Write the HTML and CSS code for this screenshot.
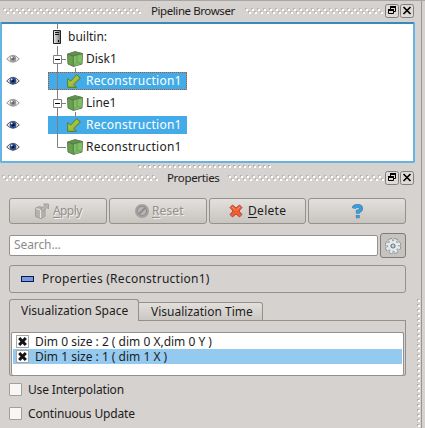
FILE: index.html
```html
<!DOCTYPE html>
<html lang="en">
<head>
<meta charset="utf-8">
<title>Pipeline Browser</title>
<link rel="stylesheet" href="styles.css">
</head>
<body>
<svg class="defs" width="0" height="0">
  <defs>
    <linearGradient id="metal"><stop offset="0" stop-color="#eee"/><stop offset="1" stop-color="#777"/></linearGradient>
    <linearGradient id="leaf" x2="1" y2="1"><stop offset="0" stop-color="#c5dd4a"/><stop offset="1" stop-color="#7da52c"/></linearGradient>
    <pattern id="grip" width="6" height="6" patternUnits="userSpaceOnUse">
      <path fill="#b9b5b2" d="M0 0h2v2h-2zM3 3h2v2h-2z"/><path fill="#fff" d="M1 1h2v2h-2zM4 4h2v2h-2z"/>
    </pattern>
    <pattern id="hdots" width="5" height="3" patternUnits="userSpaceOnUse">
      <path fill="#b3afac" d="M0 0h2v2h-2z"/><path fill="#fff" d="M1 1h2v2h-2z"/>
    </pattern>
    <pattern id="vdots" width="3" height="5" patternUnits="userSpaceOnUse">
      <path fill="#b3afac" d="M0 0h2v2h-2z"/><path fill="#fff" d="M1 1h2v2h-2z"/>
    </pattern>
    <symbol id="eye" viewBox="0 0 14 10">
      <path d="M.7 5Q7-2.5 13.3 5Q7 11.5.7 5z" fill="#eee" stroke="#555" stroke-width="1"/>
      <circle cx="7" cy="4.8" r="3.4" fill="#2c4f91"/><circle cx="7" cy="4.8" r="1.6" fill="#071637"/><circle cx="5.7" cy="3.4" r=".9" fill="#dce6fa"/>
    </symbol>
    <symbol id="eye-off" viewBox="0 0 14 10">
      <path d="M.7 5Q7-2.5 13.3 5Q7 11.5.7 5z" fill="#eee" stroke="#999" stroke-width="1"/>
      <circle cx="7" cy="4.8" r="3.2" fill="#999"/><circle cx="7" cy="4.8" r="1.5" fill="#666"/><circle cx="5.7" cy="3.4" r=".9" fill="#fff"/>
    </symbol>
    <symbol id="cube" viewBox="0 0 16 16">
      <path d="M.5 3L8 .6l7.500 1.900-.5 10.500L6.500 15.500l-5.500-2.500z" fill="#68a04f" stroke="#587d4e" stroke-linejoin="round"/>
      <path d="M.8 3.200L8 1l7.200 1.700L6.200 5z" fill="#648d55"/><path d="M6.200 5l9-2.300-.5 10-8.200 2.600z" fill="#80bd66"/>
      <path d="M.8 3.200L6.200 5l.3 10M6.200 5l9-2.300" fill="none" stroke="#4d7440" stroke-width=".8"/>
      <path d="M10 4v7.500l4.500 1.200M10 11.500l-3.500 3.500" fill="none" stroke="#5f984b" stroke-width=".8"/>
    </symbol>
    <symbol id="arrow" viewBox="0 0 14 14">
      <path d="M.7 4.500V13.300H9.500L6.900 10.500L13.300 4.200L9.700.7L3.600 7.200z" fill="url(#leaf)" stroke="#587b22" stroke-linejoin="round"/>
    </symbol>
    <symbol id="float" viewBox="0 0 15 15">
      <rect x=".5" y=".5" width="13" height="13" rx="2" fill="#dedad7" stroke="#817e7b"/>
      <path d="M5.500 6V3.500h5v4H9" fill="none" stroke="#000"/><path d="M5 2h6v2H5zM3 5h6v2H3z"/><path d="M3.500 6.500h5v3h-5z" fill="#dedad7" stroke="#000"/>
    </symbol>
    <symbol id="close" viewBox="0 0 15 15">
      <rect x=".5" y=".5" width="13" height="13" rx="2" fill="#dedad7" stroke="#817e7b"/>
      <path d="M3.500 3l7 7M10.500 3l-7 7" stroke="#000" stroke-width="1.700"/>
    </symbol>
    <symbol id="mark" viewBox="0 0 13 13">
      <rect x=".5" y=".5" width="12" height="12" fill="#fff" stroke="#a9a6a3"/>
      <path d="M3.200 3l6.600 7M9.800 3l-6.600 7" stroke="#151515" stroke-width="3"/>
    </symbol>
  </defs>
</svg>
<div class="window">
  <main class="dock">
    <header class="titlebar">
      <svg class="grip" width="138" height="6"><rect width="138" height="6" fill="url(#grip)"/></svg>
      <h1 class="title t-pipeline">Pipeline Browser</h1>
      <svg class="grip" width="138" height="6"><rect width="138" height="6" fill="url(#grip)"/></svg>
      <svg class="tool first" width="15" height="15"><use href="#float"/></svg>
      <svg class="tool" width="15" height="15"><use href="#close"/></svg>
    </header>
    <section class="tree">
      <svg class="branches" width="40" height="138">
        <path d="M9.500 0v5M9.500 22v9M9.500 40v35M9.500 84v39.500H18M14 35.500h4M14 79.500h4M27.500 44v5M27.500 88v5" fill="none" stroke="#808080"/>
        <path d="M5.500 31.500h8v8h-8zM5.500 75.500h8v8h-8z" fill="#fff" stroke="#808080"/><path d="M7 35.500h5M7 79.500h5" stroke="#000"/>
      </svg>
      <div class="row root">
        <svg width="9" height="15" viewBox="0 0 9 15"><path d="M.5.500h7v13h-7z" fill="url(#metal)" stroke="#222"/><path d="M2 2.500h4M2 4.500h4" stroke="#111"/><path d="M5 10h1v2H5z"/></svg>
        <span class="name">builtin:</span>
      </div>
      <div class="row"><svg class="eye" width="14" height="10"><use href="#eye-off"/></svg><div class="item"><svg class="cube" width="16" height="16"><use href="#cube"/></svg><span class="name">Disk1</span></div></div>
      <div class="row"><svg class="eye" width="14" height="10"><use href="#eye"/></svg><div class="item selected focus"><svg class="arrow" width="14" height="14"><use href="#arrow"/></svg><span class="name long">Reconstruction1</span></div></div>
      <div class="row"><svg class="eye" width="14" height="10"><use href="#eye-off"/></svg><div class="item"><svg class="cube" width="16" height="16"><use href="#cube"/></svg><span class="name">Line1</span></div></div>
      <div class="row"><svg class="eye" width="14" height="10"><use href="#eye"/></svg><div class="item selected"><svg class="arrow" width="14" height="14"><use href="#arrow"/></svg><span class="name long">Reconstruction1</span></div></div>
      <div class="row"><svg class="eye" width="14" height="10"><use href="#eye"/></svg><div class="item"><svg class="cube" width="16" height="16"><use href="#cube"/></svg><span class="name long">Reconstruction1</span></div></div>
    </section>
    <svg class="splitter" width="134" height="3"><rect width="134" height="3" fill="url(#hdots)"/></svg>
    <header class="titlebar second">
      <svg class="grip" width="156" height="6"><rect width="156" height="6" fill="url(#grip)"/></svg>
      <h1 class="title t-properties">Properties</h1>
      <svg class="grip" width="156" height="6"><rect width="156" height="6" fill="url(#grip)"/></svg>
      <svg class="tool first" width="15" height="15"><use href="#float"/></svg>
      <svg class="tool" width="15" height="15"><use href="#close"/></svg>
    </header>
    <div class="buttons">
      <button class="btn disabled"><svg width="16" height="16" viewBox="0 0 16 16"><path d="M1.500 5l4-1.500 5.500 2v8l-4 2-5.500-2z" fill="#b4b2b0" stroke="#a09e9c"/><path d="M2 5.500l4.500 1.500v8M6.500 7l4-1.500" fill="none" stroke="#e6e4e1"/><path d="M6.500 6l4.500-3.500-1.500-1.500h5v5l-1.500-1.500L9 8.500z" fill="#b8b5b3" stroke="#9a9896" stroke-width=".8"/></svg><span class="b-apply"><u>A</u>pply</span></button>
      <button class="btn disabled"><svg width="16" height="16" viewBox="0 0 16 16"><circle cx="8" cy="8" r="7" fill="#a3a19f"/><circle cx="8" cy="8" r="4.500" fill="#b8b6b4" stroke="#8f8d8b"/><path d="M5 11l6-6" stroke="#8f8d8b" stroke-width="2"/></svg><span class="b-reset"><u>R</u>eset</span></button>
      <button class="btn"><svg width="14" height="14" viewBox="0 0 14 14"><path d="M3.500 1L7 4l3.500-3L13 3.500 10 7l3 3.500-2.500 2.500L7 10l-3.500 3L1 10.500 4 7 1 3.500z" fill="#f55a30" stroke="#a5523f" stroke-linejoin="round"/><path d="M3 3l3.500 3M11 3L8 5.500" stroke="#ff9b78"/></svg><span class="b-delete"><u>D</u>elete</span></button>
      <button class="btn help"><svg width="12" height="15" viewBox="0 0 12 15"><path d="M1.500 4.500Q2.200 2 5.500 2Q9.500 2 9 5Q8.700 6.500 5.800 7.500V9.700M5.800 11v3.300" fill="none" stroke="#607f94" stroke-width="3.900"/><path d="M2 4.300Q3 2.200 5.500 2.200Q9.200 2.200 8.800 5Q8.500 6.300 5.800 7.500V9.200M5.800 11.500v2.200" fill="none" stroke="#28a5f5" stroke-width="2.500"/></svg></button>
    </div>
    <div class="searchbar">
      <div class="search"><span>Search...</span></div>
      <button class="gear"><svg width="18" height="18" viewBox="-9 -9 18 18"><circle r="6.100" fill="none" stroke="#77828b" stroke-width="4" stroke-dasharray="3.200 1.590"/><circle r="5.500" fill="#e4ebef" stroke="#8b959d"/><circle r="5.800" fill="none" stroke="#e4ebef" stroke-width="3.200" stroke-dasharray="2.600 1.955" stroke-dashoffset="-.2"/><circle r="2" fill="#cfd3d5" stroke="#747c82" stroke-width="1.200"/></svg></button>
    </div>
    <div class="group"><i class="minus"></i><span class="g-title">Properties (Reconstruction1)</span></div>
    <div class="tabs">
      <div class="tab active"><span>Visualization Space</span></div>
      <div class="tab"><span>Visualization Time</span></div>
      <div class="tabline"></div>
    </div>
    <div class="panel">
      <div class="list">
        <div class="option"><svg width="13" height="13"><use href="#mark"/></svg><span>Dim 0 size : 2 ( dim 0 X,dim 0 Y )</span></div>
        <div class="option chosen"><svg width="13" height="13"><use href="#mark"/></svg><span>Dim 1 size : 1 ( dim 1 X )</span></div>
      </div>
    </div>
    <label class="check"><i class="box"></i><span>Use Interpolation</span></label>
    <label class="check"><i class="box"></i><span>Continuous Update</span></label>
  </main>
  <aside class="edge"><svg width="3" height="130"><rect width="3" height="130" fill="url(#vdots)"/></svg></aside>
</div>
</body>
</html>
```
FILE: styles.css
```css
* { box-sizing: border-box; }
body { margin: 0; width: 425px; height: 428px; overflow: hidden; background: #d6d2cf; color: #1d1d1d; font: 12px/16px "Noto Sans", sans-serif; }
svg { display: block; flex: none; }
span, h1 { white-space: nowrap; }
.defs { position: absolute; }
.window { display: flex; height: 428px; border-top: 1px solid #aaa6a3; }
.dock { width: 415px; }
.edge { width: 7px; padding: 298px 0 0 2px; border-right: 1px solid #999693; }
.titlebar { display: flex; align-items: flex-start; height: 21px; padding: 3px 0 0 3px; }
.titlebar .grip { margin-top: 4px; }
.title { margin: -1px 10px 0; font-size: 11.5px; line-height: 16px; font-weight: 400; letter-spacing: -.42px; }
.t-pipeline { width: 84px; }
.t-properties { width: 52px; margin: -1px 9px 0; letter-spacing: -.34px; }
.tool.first { margin-left: 2px; }
.second .first { margin-left: 1px; }
.tree { position: relative; height: 141px; padding: 2px 0 0; border: 2px solid #65b3e3; border-top-color: #388abd; border-radius: 2px; background: #fff; }
.branches { position: absolute; left: 46px; top: 0; z-index: 1; }
.row { display: flex; align-items: center; height: 22px; }
.root { padding-left: 51px; }
.root .name { margin-left: 6px; }
.eye { margin-left: 4px; }
.item { display: flex; align-items: center; width: 139px; height: 18px; margin-left: 28px; padding-left: 19px; }
.item .name { margin-left: 3px; }
.long { letter-spacing: .26px; }
.arrow { margin-right: 2px; }
.selected { background: #43ace8; color: #fff; }
.focus { padding-left: 18px; border: 1px dotted #c0501c; }
.splitter { margin: 2px 0 0 138px; }
.second { height: 30px; padding: 3px 0 0 2px; }
.buttons { display: grid; grid-template-columns: 98px 98px 98px 98px; column-gap: 2px; padding-left: 9px; height: 26px; width: 415px; }
.btn { display: flex; align-items: center; justify-content: flex-start; height: 26px; padding: 0 0 0 24px; border: 1px solid #94908d; border-radius: 3px; background: linear-gradient(#e3e0dd, #c8c4c0); color: #1d1d1d; font: 12px/16px "Noto Sans", sans-serif; }
.btn span { margin-left: 3px; }
.b-apply { letter-spacing: -.6px; }
.btn .b-reset { margin-left: 2px; letter-spacing: .1px; }
.btn u { text-underline-offset: 2px; }
.btn:nth-child(3) { width: 97px; padding-left: 19px; }
.btn .b-delete { margin-left: 5px; letter-spacing: .3px; }
.btn.disabled { color: #93908d; text-shadow: 1px 1px #f0eeec; }
.btn.help { margin-left: -1px; width: 98px; padding-left: 43px; }
.searchbar { display: flex; gap: 2px; align-items: center; height: 25px; margin: 9px 0 0 9px; }
.search { width: 369px; height: 21px; padding: 1px 4px; border: 1px solid #94908d; border-radius: 2px; background: #fff; color: #8b8b8b; letter-spacing: -.1px; }
.gear { display: flex; align-items: center; width: 26px; height: 25px; padding: 0 3px; border: 1px solid #7e7a77; border-radius: 3px; background: #c7c3bf; }
.group { display: flex; align-items: center; width: 397px; height: 28px; margin: 7px 0 0 9px; padding-left: 11px; border: 1px solid #94908d; border-radius: 3px; }
.g-title { letter-spacing: .26px; }
.minus { width: 13px; height: 6px; margin-right: 8px; border: 1px solid #0b1550; background: #7799df; }
.tabs { display: flex; align-items: flex-end; height: 22px; margin: 6px 0 0 9px; width: 397px; }
.tab { width: 124px; height: 19px; padding: 1px 0 0 12px; border: solid #94908d; border-width: 1px 1px 1px 0; border-radius: 0 3px 0 0; background: linear-gradient(#e2dfdc, #cbc7c3); }
.tab.active { width: 130px; height: 22px; padding: 3px 0 0 11px; border-width: 1px 1px 0; border-radius: 3px 3px 0 0; background: none; }
.tabline { flex: 1; height: 1px; background: #94908d; }
.panel { width: 397px; height: 55px; margin-left: 9px; padding: 11px 1px 0; border: solid #94908d; border-width: 0 1px 1px; border-radius: 0 0 3px 3px; }
.list { height: 43px; padding: 1px 1px 0; border: 1px solid #94908d; border-bottom: 0; border-radius: 2px; background: #fff; }
.option { display: flex; align-items: center; height: 15px; padding-left: 3px; line-height: 15px; }
.option svg { margin-right: 6px; }
.chosen { background: #94caf0; }
.check { display: flex; align-items: center; height: 13px; margin: 7px 0 0 9px; letter-spacing: -.15px; }
.check + .check { margin-top: 11px; }
.box { width: 13px; height: 13px; margin-right: 6px; border: 1px solid #a29e9b; background: #f8f7f6; border-radius: 1px; }
```
